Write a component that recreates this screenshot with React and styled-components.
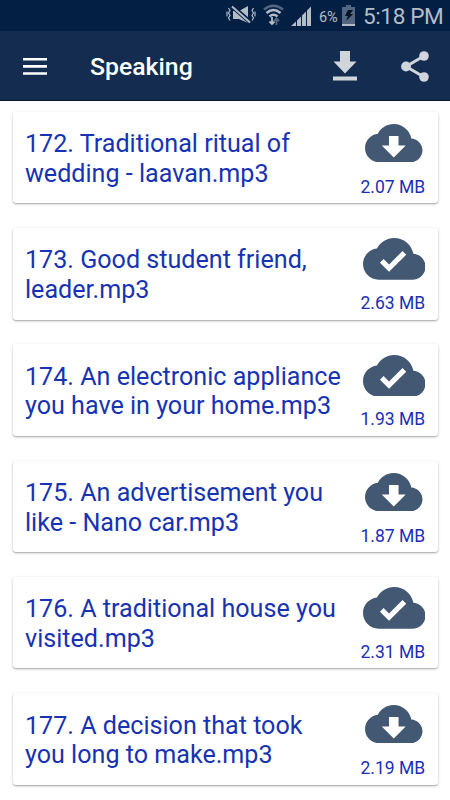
import styled, { createGlobalStyle } from 'styled-components';

const GlobalStyle = createGlobalStyle`
	* {
		box-sizing: border-box;
	}

	body {
		margin: 0;
		background-color: #fff;
		font-family: Roboto, 'Noto Sans', sans-serif;
	}
`;

const Screen = styled.div`
	width: 450px;
	height: 800px;
	overflow: hidden;
	background-color: #fff;
`;

const StatusBar = styled.div`
	display: flex;
	align-items: center;
	justify-content: flex-end;
	height: 31px;
	padding: 0 7px 1px 0;
	background-color: #032044;
	color: #b3bcc7;
`;

const StatusIcons = styled.div`
	display: flex;
	align-items: center;
	gap: 7px;

	svg {
		display: block;
		flex: none;
	}
`;

const Battery = styled.span`
	width: 21px;
	margin: 3px 2px 0 7px;
	font-size: 14.6px;
	line-height: 20px;
	letter-spacing: -0.3px;
	white-space: nowrap;
`;

const Clock = styled.span`
	width: 80px;
	margin: 4px 0 0 8px;
	font-size: 22.6px;
	line-height: 28px;
	letter-spacing: -0.4px;
	white-space: nowrap;
`;

const Toolbar = styled.header`
	display: flex;
	align-items: center;
	height: 70px;
	padding: 1px 21px 0 23px;
	background-color: #132c50;
	border-bottom: 1px solid #061737;
`;

const Title = styled.h1`
	flex: 1;
	margin: 2px 0 0 43px;
	color: #fff;
	font-size: 24.8px;
	font-weight: 500;
	line-height: 32px;
`;

const IconButton = styled.button`
	display: flex;
	margin: 0 0 0 ${({ $gap }) => $gap || 0}px;
	padding: 0;
	border: 0;
	background: none;
	color: ${({ $color }) => $color || '#d0d5dc'};
`;

const List = styled.main`
	display: flex;
	flex-direction: column;
	gap: 24.8px;
	padding: 10.8px 12px 0 12.5px;
`;

const Card = styled.article`
	display: flex;
	justify-content: space-between;
	height: 91.5px;
	padding: 17.3px 11.5px 0 12.5px;
	border-radius: 3px;
	background-color: #fff;
	box-shadow: 0 1px 3px rgba(0, 0, 0, 0.24), 0 1px 1px rgba(0, 0, 0, 0.16);
`;

const Name = styled.div`
	color: #1733b3;
	font-size: 25.12px;
	line-height: 29.6px;
	white-space: nowrap;
`;

const Side = styled.div`
	display: flex;
	flex-direction: column;
	align-items: center;
	width: 65px;
	margin-top: -17.3px;
`;

const CloudBox = styled.div`
	display: flex;
	align-items: center;
	height: 42px;
	margin-top: 10px;
	color: #435873;
`;

const Size = styled.div`
	margin: 13px 2.4px 0 0;
	color: #1a2fb5;
	font-size: 17.5px;
	line-height: 20px;
	white-space: nowrap;
`;

const cloud =
	'M19.35 6.04C18.67 2.59 15.64 0 12 0 9.11 0 6.6 1.64 5.35 4.04 2.34 4.36 0 6.91 0 10c0 3.31 2.69 6 6 6h13c2.76 0 5-2.24 5-5 0-2.64-2.05-4.78-4.65-4.96z';

const Cloud = ({ done }) => (
	<svg width={done ? 62.5 : 57.5} height={done ? 41.7 : 38.3} viewBox="0 0 24 16">
		<path fill="currentColor" d={cloud} />
		<path
			fill="#fff"
			d={
				done
					? 'M10 13L6.5 9.5l1.41-1.41L10 10.17 15.18 5l1.41 1.41z'
					: 'M17 9l-5 5-5-5h3V5h4v4z'
			}
		/>
	</svg>
);

const MutedIcon = () => (
	<svg width="30" height="20" viewBox="0 0 30 20" fill="none" stroke="currentColor">
		<path d="M7 6h6l9-5v17l-9-4H7z" fill="currentColor" stroke="none" />
		<path d="M6 1l18 16" stroke="#032044" strokeWidth="4.4" />
		<path d="M6 1.5l18 16" strokeWidth="2" />
		<path
			d="M2.500 3l1.500 2.500-1.500 2.500L4 10.500 2.500 13 4 15.500M1 6.500v5M27.500 3L26 5.500l1.500 2.500-1.500 2.500 1.500 2.500-1.500 2.500M29 6.500v5"
			strokeWidth="1.2"
		/>
	</svg>
);

const WifiIcon = () => (
	<svg width="21" height="22" viewBox="0 0 21 22" fill="none" stroke="currentColor">
		<path d="M1 5.5Q10.5-2 20 5.5" stroke="#536780" strokeWidth="2.5" />
		<path d="M3.5 9q7-6 14 0M6.5 12.5q4-3.5 8 0" strokeWidth="2.5" />
		<path d="M9 13v7M6.5 17.5L9 20l2.5-2.5" strokeWidth="1.8" />
		<path d="M13.5 21v-6M11 17l2.5-2.5 2.5 2.5" stroke="#536780" strokeWidth="1.8" />
	</svg>
);

const SignalIcon = () => (
	<svg width="21" height="21" viewBox="0 0 21 21" fill="currentColor">
		<path d="M0 21l5-4.5V21zM6 21v-5.500l4-4V21zM11 21V10.500l4-4V21zM16 21V5.500l4-4V21z" />
	</svg>
);

const BatteryIcon = () => (
	<svg width="13" height="21" viewBox="0 0 13 21">
		<path d="M4 0h5v2h4v19H0V2h4z" fill="#536780" />
		<path d="M0 19h13v2H0z" fill="#b3bcc7" />
		<path d="M6 5h5L8 9h3l-7 7 2-5H3z" fill="#021124" />
	</svg>
);

const files = [
	{ lines: ['172. Traditional ritual of', 'wedding - laavan.mp3'], size: '2.07 MB' },
	{ lines: ['173. Good student friend,', 'leader.mp3'], size: '2.63 MB', done: true },
	{ lines: ['174. An electronic appliance', 'you have in your home.mp3'], size: '1.93 MB', done: true },
	{ lines: ['175. An advertisement you', 'like - Nano car.mp3'], size: '1.87 MB' },
	{ lines: ['176. A traditional house you', 'visited.mp3'], size: '2.31 MB', done: true },
	{ lines: ['177. A decision that took', 'you long to make.mp3'], size: '2.19 MB' },
];

const App = () => {
	return (
		<Screen>
			<GlobalStyle />
			<StatusBar>
				<StatusIcons>
					<MutedIcon />
					<WifiIcon />
					<SignalIcon />
				</StatusIcons>
				<Battery>6%</Battery>
				<StatusIcons>
					<BatteryIcon />
				</StatusIcons>
				<Clock>5:18 PM</Clock>
			</StatusBar>
			<Toolbar>
				<IconButton $color="#fff" aria-label="Menu">
					<svg width="24" height="17" viewBox="0 0 24 17" fill="currentColor">
						<path d="M0 0h24v2.6H0zM0 7.1h24v2.6H0zM0 14.2h24v2.6H0z" />
					</svg>
				</IconButton>
				<Title>Speaking</Title>
				<IconButton aria-label="Download">
					<svg width="24" height="30" viewBox="0 0 24 30" fill="currentColor">
						<path d="M7 0h10v10.5h6.5L12 22.5.5 10.5H7zM0 25.5h24v4H0z" />
					</svg>
				</IconButton>
				<IconButton $gap={44} aria-label="Share">
					<svg width="28" height="31" viewBox="0 0 28 31" fill="currentColor">
						<path d="M23 5L5 15.5 23 26" fill="none" stroke="currentColor" strokeWidth="3" />
						<circle cx="23" cy="5" r="4.8" />
						<circle cx="5" cy="15.5" r="4.9" />
						<circle cx="23" cy="26" r="4.8" />
					</svg>
				</IconButton>
			</Toolbar>
			<List>
				{files.map(({ lines, size, done }) => (
					<Card key={size}>
						<Name>
							{lines.map((line) => (
								<div key={line}>{line}</div>
							))}
						</Name>
						<Side>
							<CloudBox>
								<Cloud done={done} />
							</CloudBox>
							<Size>{size}</Size>
						</Side>
					</Card>
				))}
			</List>
		</Screen>
	);
};

export default App;
